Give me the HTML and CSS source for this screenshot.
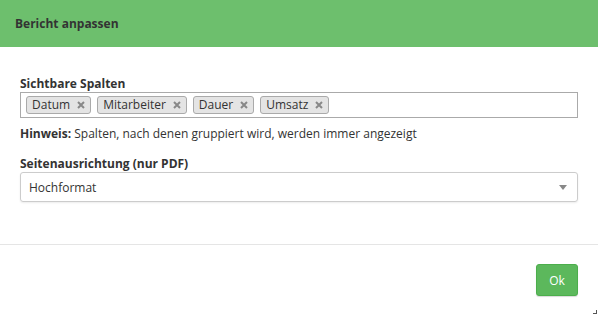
FILE: index.html
```html
<!DOCTYPE html>
<html lang="de">
<head>
    <meta charset="UTF-8">
    <title>Bericht anpassen</title>
    <link rel="stylesheet" href="styles.css">
</head>
<body>

<div class="dialog">
    <div class="dialog-header">Bericht anpassen</div>
    <div class="dialog-body">
        <label class="field-label">Sichtbare Spalten</label>
        <div class="tag-box">
            <span class="tag">Datum <svg class="tag-x" viewBox="0 0 8 8"><path d="M1 1L7 7M7 1L1 7"/></svg></span>
            <span class="tag">Mitarbeiter <svg class="tag-x" viewBox="0 0 8 8"><path d="M1 1L7 7M7 1L1 7"/></svg></span>
            <span class="tag">Dauer <svg class="tag-x" viewBox="0 0 8 8"><path d="M1 1L7 7M7 1L1 7"/></svg></span>
            <span class="tag">Umsatz <svg class="tag-x" viewBox="0 0 8 8"><path d="M1 1L7 7M7 1L1 7"/></svg></span>
        </div>
        <p class="hint"><b>Hinweis:</b> Spalten, nach denen gruppiert wird, werden immer angezeigt</p>

        <label class="field-label second">Seitenausrichtung (nur PDF)</label>
        <div class="select">
            <span>Hochformat</span>
            <span class="caret"></span>
        </div>
    </div>
    <div class="dialog-footer">
        <button class="btn-ok">Ok</button>
    </div>
    <span class="resize"></span>
</div>

</body>
</html>
```

FILE: styles.css
```css
body {
    margin: 0;
    font-family: "Open Sans", sans-serif;
    font-size: 12px;
    color: #333;
    background: #fff;
}
.dialog {
    position: relative;
    width: 598px;
    height: 315px;
}
.dialog-header {
    background: #6dbf6d;
    height: 47px;
    line-height: 47px;
    padding: 0 15px;
    font-weight: bold;
    font-size: 12px;
    color: #333;
}
.dialog-body {
    padding: 29px 20px 0 20px;
    height: 168px;
    border-bottom: 1px solid #e5e5e5;
}
.field-label {
    display: block;
    font-weight: bold;
    line-height: 16px;
}
.field-label.second {
    margin-top: 14px;
}
.tag-box {
    display: flex;
    gap: 6px;
    border: 1px solid #aaa;
    height: 24px;
    padding: 0 5px;
    align-items: center;
}
.tag {
    display: inline-flex;
    align-items: center;
    background: #e4e4e4;
    border: 1px solid #aaa;
    border-radius: 3px;
    height: 16px;
    padding: 0 5px;
    line-height: 16px;
}
.tag-x {
    width: 8px;
    height: 8px;
    margin-left: 7px;
    stroke: #888;
    stroke-width: 2;
    fill: none;
}
.hint {
    margin: 8px 0 0 0;
    line-height: 16px;
}
.select {
    display: flex;
    justify-content: space-between;
    align-items: center;
    border: 1px solid #ccc;
    border-radius: 3px;
    height: 28px;
    padding: 0 8px;
    box-shadow: 0 1px 2px rgba(0, 0, 0, 0.08);
}
.caret {
    width: 0;
    height: 0;
    border-left: 4px solid transparent;
    border-right: 4px solid transparent;
    border-top: 5px solid #888;
    margin-right: 2px;
}
.dialog-footer {
    display: flex;
    justify-content: flex-end;
    padding: 19px 20px 0 0;
}
.btn-ok {
    background: #5cb85c;
    color: #fff;
    border: 1px solid #4cae4c;
    border-radius: 3px;
    width: 42px;
    height: 32px;
    font-family: "Open Sans", sans-serif;
    font-size: 12px;
    box-shadow: 0 1px 1px rgba(0, 0, 0, 0.15);
}
.resize {
    position: absolute;
    right: 1px;
    bottom: 1px;
    width: 3px;
    height: 3px;
    border-right: 1px solid #555;
    border-bottom: 1px solid #555;
}
```
